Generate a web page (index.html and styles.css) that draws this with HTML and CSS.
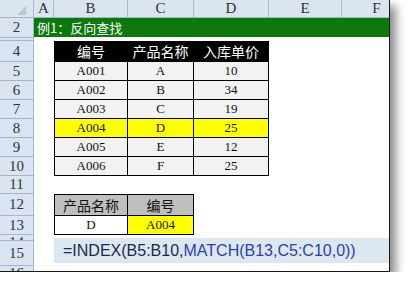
FILE: index.html
```html
<!DOCTYPE html>
<html lang="zh-CN">
<head>
    <meta charset="UTF-8">
    <title>例1：反向查找</title>
    <link rel="stylesheet" href="styles.css">
</head>
<body>
    <div class="sheet">
        <table class="grid">
            <thead>
                <tr class="col-heads">
                    <th class="corner">
                        <svg width="9" height="9" viewBox="0 0 9 9"><polygon points="9,0 9,9 0,9" fill="#b9c7d8"/></svg>
                    </th>
                    <th class="w-a">A</th>
                    <th class="w-b">B</th>
                    <th class="w-c">C</th>
                    <th class="w-d">D</th>
                    <th class="w-e">E</th>
                    <th class="w-f">F</th>
                </tr>
            </thead>
            <tbody>
                <tr class="r-title">
                    <th>2</th>
                    <td colspan="6" class="title">例1：反向查找</td>
                </tr>
                <tr class="r-thin">
                    <th></th>
                    <td colspan="6"></td>
                </tr>
                <tr class="r-top">
                    <th>4</th>
                    <td></td>
                    <td class="cell first head">编号</td>
                    <td class="cell head">产品名称</td>
                    <td class="cell head">入库单价</td>
                    <td></td><td></td>
                </tr>
                <tr class="r">
                    <th>5</th><td></td>
                    <td class="cell first">A001</td><td class="cell">A</td><td class="cell">10</td>
                    <td></td><td></td>
                </tr>
                <tr class="r">
                    <th>6</th><td></td>
                    <td class="cell first">A002</td><td class="cell">B</td><td class="cell">34</td>
                    <td></td><td></td>
                </tr>
                <tr class="r">
                    <th>7</th><td></td>
                    <td class="cell first">A003</td><td class="cell">C</td><td class="cell">19</td>
                    <td></td><td></td>
                </tr>
                <tr class="r hit">
                    <th>8</th><td></td>
                    <td class="cell first">A004</td><td class="cell">D</td><td class="cell">25</td>
                    <td></td><td></td>
                </tr>
                <tr class="r">
                    <th>9</th><td></td>
                    <td class="cell first">A005</td><td class="cell">E</td><td class="cell">12</td>
                    <td></td><td></td>
                </tr>
                <tr class="r">
                    <th>10</th><td></td>
                    <td class="cell first">A006</td><td class="cell">F</td><td class="cell">25</td>
                    <td></td><td></td>
                </tr>
                <tr class="r-gap">
                    <th>11</th><td colspan="6"></td>
                </tr>
                <tr class="r-top">
                    <th>12</th><td></td>
                    <td class="cell first lookup-head top">产品名称</td>
                    <td class="cell lookup-head top">编号</td>
                    <td></td><td></td><td></td>
                </tr>
                <tr class="r">
                    <th>13</th><td></td>
                    <td class="cell first blank">D</td>
                    <td class="cell result">A004</td>
                    <td></td><td></td><td></td>
                </tr>
                <tr class="r-clip">
                    <th><div class="clip">14</div></th><td colspan="6"></td>
                </tr>
                <tr class="r-tall">
                    <th>15</th><td colspan="6"></td>
                </tr>
                <tr class="r-clip">
                    <th><div class="clip">16</div></th><td colspan="6"></td>
                </tr>
            </tbody>
        </table>

        <!-- formula bar pasted over the sheet -->
        <div class="formula"><span class="fn">=INDEX(B5:B10,</span><span class="fn-inner">MATCH(B13,C5:C10,0))</span></div>
    </div>
</body>
</html>
```

FILE: styles.css
```css
body {
    margin: 0;
    background: #fff;
}

.sheet {
    position: relative;
    width: 389px;
    height: 271px;
    overflow: hidden;
    background: #fff;
    border-right: 1px solid #1a1a1a;
    border-bottom: 1px solid #1a1a1a;
    box-shadow: 6px 6px 9px rgba(0, 0, 0, 0.45);
}

.grid {
    border-collapse: separate;
    border-spacing: 0;
    table-layout: fixed;
    width: 412px;
    font-family: "Liberation Serif", serif;
    color: #222;
}

.grid th,
.grid td {
    box-sizing: border-box;
    padding: 0;
    text-align: center;
    vertical-align: middle;
    white-space: nowrap;
}

/* headers */
.col-heads th {
    height: 18px;
    background: #dbe5f1;
    border-right: 1px solid #a9bdd3;
    border-bottom: 1px solid #9eb6ce;
    font-weight: normal;
    font-size: 15px;
    line-height: 17px;
    color: #333;
}

.col-heads .corner {
    width: 34px;
    text-align: right;
    vertical-align: bottom;
}

.corner svg {
    display: block;
    margin: 0 7px 2px auto;
}

.w-a { width: 20px; }
.w-b { width: 74px; }
.w-c { width: 66px; }
.w-d { width: 75px; }
.w-e { width: 73px; }
.w-f { width: 70px; }

tbody th {
    background: #dbe5f1;
    border-right: 1px solid #9eb6ce;
    border-bottom: 1px solid #9eb6ce;
    font-weight: normal;
    font-size: 15px;
    color: #333;
    line-height: 1;
    overflow: hidden;
}

.r-title th,
.r-title td { height: 20px; }
.r-thin th,
.r-thin td { height: 3px; }
.r-top th,
.r-top td { height: 20px; }
.r th,
.r td { height: 19px; }
.r-gap th,
.r-gap td { height: 18px; }
.r-clip th,
.r-clip td { height: 6px; }
.r-tall th,
.r-tall td { height: 25px; }

.clip {
    height: 5px;
    overflow: hidden;
    line-height: 15px;
}

.grid .title {
    background: #0b7a0b;
    color: #fff;
    text-align: left;
    padding-left: 3px;
    font-family: "Noto Sans CJK SC", sans-serif;
    font-size: 13px;
    border-bottom: 1px solid #fff;
}

/* lookup tables */
.cell {
    background: #f2f2f2;
    border-right: 1px solid #000;
    border-bottom: 1px solid #000;
    font-size: 13px;
    color: #111;
}

.cell.first {
    border-left: 1px solid #000;
}

.cell.top {
    border-top: 1px solid #000;
}

.cell.head {
    background: #000;
    color: #fff;
    font-family: "Noto Sans CJK SC", sans-serif;
    font-size: 14px;
}

.hit .cell {
    background: #ffff00;
}

.cell.lookup-head {
    background: #bfbfbf;
    font-family: "Noto Sans CJK SC", sans-serif;
    font-size: 14px;
}

.cell.blank {
    background: #fff;
}

.cell.result {
    background: #ffff00;
}

.formula {
    position: absolute;
    left: 54px;
    right: 0;
    top: 238px;
    height: 25px;
    padding-left: 9px;
    background: #dce7f1;
    font-family: "Liberation Sans", Arial, sans-serif;
    font-size: 16px;
    line-height: 25px;
    white-space: nowrap;
}

.fn {
    color: #1b2a4e;
}

.fn-inner {
    color: #2c3fb0;
}
```
